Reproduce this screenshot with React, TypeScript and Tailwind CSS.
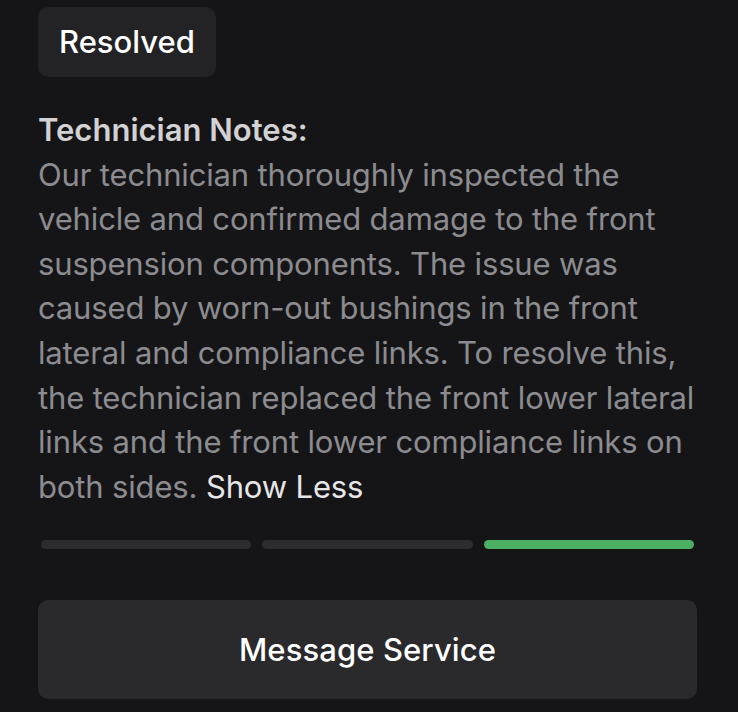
import React from 'react';

const notes =
  'Our technician thoroughly inspected the vehicle and confirmed damage to the front suspension components. The issue was caused by worn-out bushings in the front lateral and compliance links. To resolve this, the technician replaced the front lower lateral links and the front lower compliance links on both sides.';

export default function App() {
  const steps = [false, false, true];

  return (
    <div
      className="w-[738px] h-[712px] overflow-hidden bg-[#151517] pl-[38px] pr-[40px] pt-[7px]"
      style={{ fontFamily: 'Inter, "Noto Sans", sans-serif' }}
    >
      {/* Status badge */}
      <div className="inline-flex h-[70px] items-center rounded-[10px] bg-[#232325] px-[21px] text-[31px] font-medium text-white">
        Resolved
      </div>

      {/* Notes */}
      <div className="mt-[31px] text-[31px] leading-[44.6px]">
        <div className="font-semibold text-[#d2d2d4]">Technician Notes:</div>
        <p className="tracking-[-0.15px] text-[#8c8c90]">
          {notes} <span className="text-[#e6e6e8]">Show Less</span>
        </p>
      </div>

      {/* Progress */}
      <div className="mt-[31px] flex gap-[11px] pl-[3px] pr-[4px]">
        {steps.map((done, i) => (
          <div
            key={i}
            className={`h-[9px] flex-1 rounded-full ${done ? 'bg-[#4caf63]' : 'bg-[#2c2c2f]'}`}
          />
        ))}
      </div>

      <button className="mt-[51px] flex h-[99px] w-[659px] items-center justify-center rounded-[10px] bg-[#2a2a2c] text-[31px] font-medium tracking-[0.1px] text-white">
        Message Service
      </button>
    </div>
  );
}
